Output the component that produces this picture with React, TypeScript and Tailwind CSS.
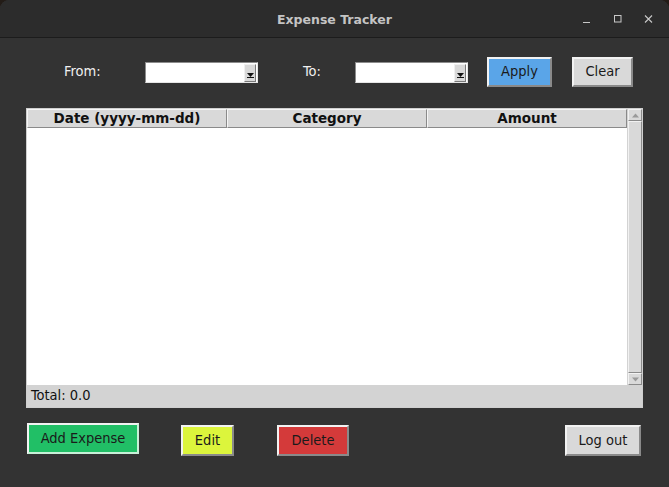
import React from "react";

const uiFont = { fontFamily: '"DejaVu Sans Condensed", "DejaVu Sans", "Liberation Sans", sans-serif', fontStretch: "condensed" } as const;
const boldFont = { fontFamily: '"DejaVu Sans", "Liberation Sans", sans-serif' } as const;

function Combo() {
  return (
    <div className="flex h-[21px] w-[113px] border border-t-[#8c8c8c] border-l-[#8c8c8c] border-r-[#e6e6e6] border-b-[#e6e6e6] bg-white">
      <div className="flex-1" />
      <div className="mr-px mt-px flex h-[18px] w-[12px] items-end justify-center border border-t-[#f0f0f0] border-l-[#f0f0f0] border-r-[#7a7a7a] border-b-[#7a7a7a] bg-[#d9d9d9] pb-[3px]">
        <svg width="7" height="5" viewBox="0 0 7 5">
          <path d="M0 0h7L3.5 4z" fill="#111" />
          <path d="M0 4.5h7" stroke="#111" strokeWidth="1" />
        </svg>
      </div>
    </div>
  );
}

function TkButton({ label, className }: { label: string; className: string }) {
  return (
    <button
      className={`flex items-center justify-center border-2 border-t-[#f2f2f2] border-l-[#f2f2f2] border-r-[#8a8a8a] border-b-[#8a8a8a] text-[14.5px] text-[#1a1a1a] ${className}`}
      style={uiFont}
    >
      {label}
    </button>
  );
}

export default function App() {
  return (
    <div className="h-[487px] w-[669px] overflow-hidden bg-[#231c17]">
      <div className="flex h-full flex-col overflow-hidden rounded-t-[9px] bg-[#333333]">
        {/* title bar */}
        <div className="relative flex h-[38px] shrink-0 items-center justify-center border-b border-[#1c1c1c] bg-[#2c2c2c] pt-[3px]">
          <span className="text-[12.5px] font-bold text-[#c4c4c4]" style={boldFont}>
            Expense Tracker
          </span>
          <div className="absolute right-[16px] top-[14px] flex items-center gap-[22px]">
            <svg width="9" height="10" viewBox="0 0 9 10">
              <path d="M1 8.5h7" stroke="#c8c8c8" strokeWidth="1" />
            </svg>
            <svg width="9" height="10" viewBox="0 0 9 10">
              <rect x="1.5" y="1.5" width="6.5" height="6.5" fill="none" stroke="#c8c8c8" strokeWidth="1" />
            </svg>
            <svg width="9" height="10" viewBox="0 0 9 10">
              <path d="M1 1.5l7 7M8 1.5l-7 7" stroke="#c8c8c8" strokeWidth="1.1" />
            </svg>
          </div>
        </div>

        {/* filter row */}
        <div className="mt-[19px] flex h-[30px] items-center text-[14.5px] text-[#f0f0f0]" style={uiFont}>
          <span className="ml-[64px] w-[81px]">From:</span>
          <Combo />
          <span className="ml-[45px] w-[52px]">To:</span>
          <Combo />
          <TkButton label="Apply" className="ml-[19px] h-[30px] w-[65px] bg-[#5aa5e8]" />
          <TkButton label="Clear" className="ml-[20px] h-[30px] w-[61px] bg-[#d9d9d9]" />
        </div>

        {/* tree */}
        <div className="ml-[26px] mt-[21px] flex h-[300px] w-[617px] flex-col border border-[#cfcfcf] bg-[#d3d3d3]">
          <div className="flex h-[279px]">
            <div className="flex flex-1 flex-col bg-white">
              <div className="flex h-[19px] bg-[#d9d9d9] text-[13.5px] font-bold text-[#111]" style={boldFont}>
                {["Date (yyyy-mm-dd)", "Category", "Amount"].map((h) => (
                  <div
                    key={h}
                    className="flex w-[200px] flex-1 items-center justify-center border border-t-[#f5f5f5] border-l-[#f5f5f5] border-r-[#8a8a8a] border-b-[#8a8a8a] leading-none"
                  >
                    {h}
                  </div>
                ))}
              </div>
              <div className="flex-1 bg-white" />
            </div>
            <div className="flex w-[15px] flex-col bg-[#d3d3d3] pl-px">
              <div className="flex h-[12px] items-center justify-center border border-t-[#f2f2f2] border-l-[#f2f2f2] border-r-[#8a8a8a] border-b-[#8a8a8a] bg-[#d9d9d9]">
                <svg width="7" height="5" viewBox="0 0 7 5">
                  <path d="M0 4.5h7L3.5 0.5z" fill="#9a9a9a" />
                </svg>
              </div>
              <div className="flex-1 border border-t-[#f2f2f2] border-l-[#f2f2f2] border-r-[#8a8a8a] border-b-[#8a8a8a] bg-[#d9d9d9]" />
              <div className="flex h-[12px] items-center justify-center border border-t-[#f2f2f2] border-l-[#f2f2f2] border-r-[#8a8a8a] border-b-[#8a8a8a] bg-[#d9d9d9]">
                <svg width="7" height="5" viewBox="0 0 7 5">
                  <path d="M0 0.5h7L3.5 4.5z" fill="#9a9a9a" />
                </svg>
              </div>
            </div>
          </div>
          <div className="flex flex-1 items-center pl-[4px] text-[14.5px] text-[#111]" style={uiFont}>
            Total: 0.0
          </div>
        </div>

        {/* action buttons */}
        <div className="mt-[15px] flex items-start">
          <TkButton label="Add Expense" className="ml-[27px] h-[31px] w-[112px] bg-[#21bf66] border-r-[#c8f0d8] border-b-[#c8f0d8] border-t-[#d8f5e4] border-l-[#d8f5e4]" />
          <TkButton label="Edit" className="ml-[42px] mt-[2px] h-[31px] w-[53px] bg-[#dcf53c]" />
          <TkButton label="Delete" className="ml-[43px] mt-[2px] h-[31px] w-[72px] bg-[#d43a3a]" />
          <TkButton label="Log out" className="ml-auto mr-[28px] mt-[2px] h-[31px] w-[76px] bg-[#d9d9d9]" />
        </div>
      </div>
    </div>
  );
}
